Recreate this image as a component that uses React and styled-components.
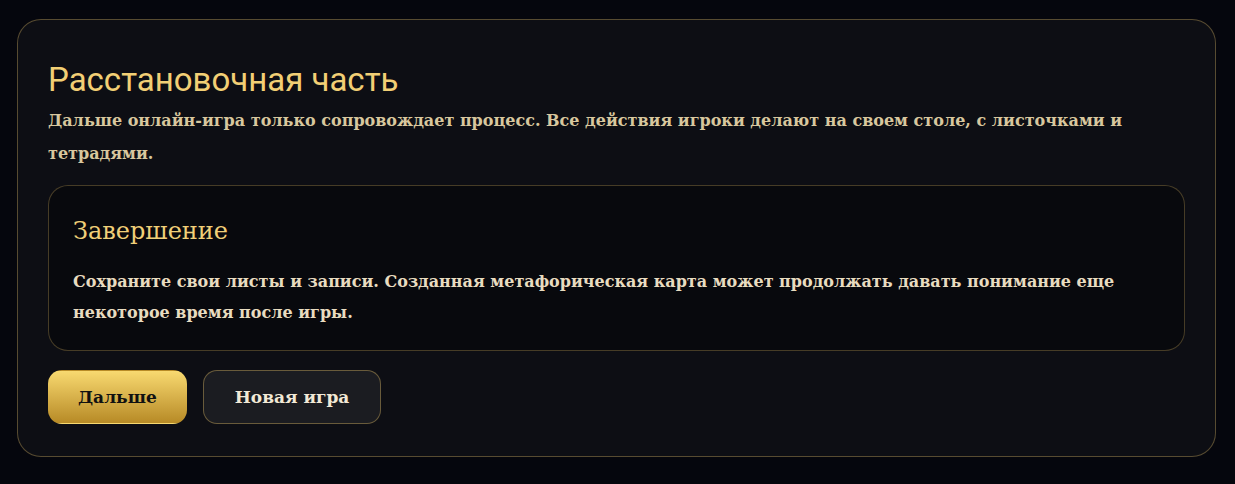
import React from 'react';
import styled, { createGlobalStyle } from 'styled-components';

const GlobalStyle = createGlobalStyle`
  html, body {
    margin: 0;
    background: #05060d;
  }
  body {
    font-family: 'DejaVu Serif', 'Liberation Serif', serif;
  }
`;

const Page = styled.div`
  padding: 19px 19px 28px 17px;
`;

const Card = styled.section`
  background: #0d0e14;
  border: 1px solid rgba(201, 168, 92, 0.4);
  border-radius: 24px;
  padding: 32px 30px;
  display: flex;
  flex-direction: column;
`;

const Title = styled.h1`
  margin: 8px 0 4px;
  font-family: Roboto, 'Noto Sans', sans-serif;
  font-weight: 400;
  font-size: 33px;
  line-height: 40px;
  color: #f2cf75;
`;

const Lead = styled.p`
  margin: 0 0 15px;
  font-family: 'DejaVu Serif', serif;
  font-size: 16px;
  font-weight: 700;
  line-height: 33px;
  color: #d8c79e;
`;

const Stage = styled.div`
  background: #08090d;
  border: 1px solid rgba(201, 168, 92, 0.32);
  border-radius: 20px;
  padding: 30px 24px 22px;
`;

const StageTitle = styled.h2`
  margin: 0 0 20px;
  font-family: 'DejaVu Serif', serif;
  font-size: 24px;
  font-weight: 400;
  line-height: 30px;
  color: #f0cf78;
`;

const StageText = styled.p`
  margin: 0;
  font-family: 'DejaVu Serif', serif;
  font-size: 16px;
  font-weight: 700;
  line-height: 31px;
  color: #e8dcc0;
`;

const Actions = styled.div`
  display: flex;
  gap: 16px;
  margin-top: 19px;
`;

const Button = styled.button`
  height: 54px;
  padding: 0 ${p => (p.$primary ? 29 : 31)}px;
  border-radius: 14px;
  font-family: 'DejaVu Serif', serif;
  font-weight: 700;
  font-size: 17px;
  cursor: pointer;
  border: 1px solid ${p => (p.$primary ? 'transparent' : 'rgba(201, 168, 92, 0.45)')};
  background: ${p =>
    p.$primary ? 'linear-gradient(180deg, #f8d970 0%, #b78a26 100%)' : '#1b1c21'};
  color: ${p => (p.$primary ? '#111' : '#f2e9d6')};
`;

export default function App() {
  return (
    <>
      <GlobalStyle />
      <Page>
        <Card>
          <Title>Расстановочная часть</Title>
          <Lead>
            Дальше онлайн-игра только сопровождает процесс. Все действия игроки делают на своем
            столе, с листочками и тетрадями.
          </Lead>
          <Stage>
            <StageTitle>Завершение</StageTitle>
            <StageText>
              Сохраните свои листы и записи. Созданная метафорическая карта может продолжать
              давать понимание еще некоторое время после игры.
            </StageText>
          </Stage>
          <Actions>
            <Button $primary>Дальше</Button>
            <Button>Новая игра</Button>
          </Actions>
        </Card>
      </Page>
    </>
  );
}
